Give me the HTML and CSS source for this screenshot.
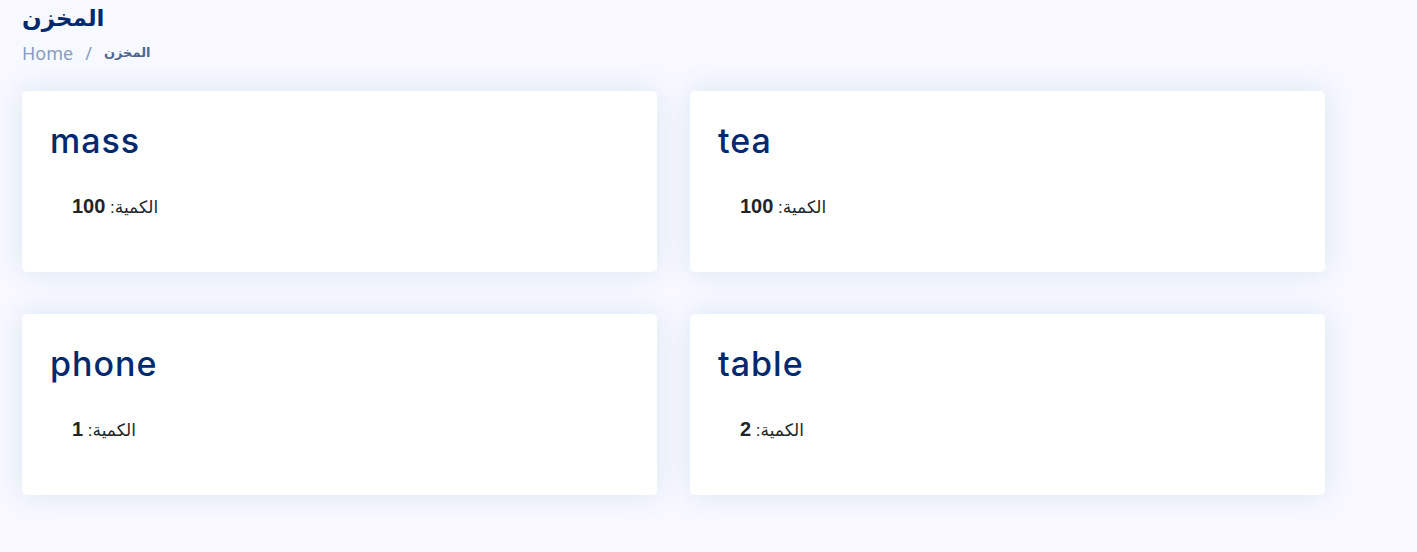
FILE: index.html
```html
<!DOCTYPE html>
<html lang="ar">
<head>
<meta charset="utf-8">
<title>المخزن</title>
<link rel="stylesheet" href="styles.css">
</head>
<body>
<main class="main">
  <div class="pagetitle">
    <h1 class="page-h">المخزن</h1>
    <nav class="breadcrumb">
      <span class="crumb-link">Home</span>
      <span class="crumb-sep">/</span>
      <span class="crumb-active">المخزن</span>
    </nav>
  </div>
  <section class="grid">
    <div class="card">
      <h2 class="card-title">mass</h2>
      <div class="qty"><span dir="rtl" class="qty-in">الكمية: <b>100</b></span></div>
    </div>
    <div class="card">
      <h2 class="card-title">tea</h2>
      <div class="qty"><span dir="rtl" class="qty-in">الكمية: <b>100</b></span></div>
    </div>
    <div class="card">
      <h2 class="card-title">phone</h2>
      <div class="qty"><span dir="rtl" class="qty-in">الكمية: <b>1</b></span></div>
    </div>
    <div class="card">
      <h2 class="card-title">table</h2>
      <div class="qty"><span dir="rtl" class="qty-in">الكمية: <b>2</b></span></div>
    </div>
  </section>
</main>
</body>
</html>
```
FILE: styles.css
```css
* { box-sizing: border-box; }
html, body { margin: 0; padding: 0; }
body {
  background: #f6f9ff;
  font-family: "Open Sans", "DejaVu Sans", sans-serif;
  color: #444444;
  width: 1417px;
  height: 552px;
  overflow: hidden;
}
.main { padding: 3px 0 0 22px; }
.pagetitle { margin-bottom: 27px; }
.page-h {
  margin: 0;
  font-family: "DejaVu Sans", sans-serif;
  font-size: 23px;
  font-weight: 700;
  color: #012970;
  line-height: 30px;
}
.breadcrumb {
  display: flex;
  align-items: center;
  gap: 10px;
  margin-top: 9px;
  font-family: "Noto Sans", "DejaVu Sans", sans-serif;
  font-size: 18px;
  line-height: 22px;
  color: #899bbd;
}
.crumb-sep { color: #899bbd; padding: 0 2px; }
.crumb-active {
  font-family: "DejaVu Sans", sans-serif;
  font-size: 13px;
  font-weight: 700;
  color: #51678f;
}
.grid {
  display: grid;
  grid-template-columns: 635px 635px;
  column-gap: 33px;
  row-gap: 42px;
}
.card {
  background: #ffffff;
  border-radius: 5px;
  box-shadow: 0 0 30px rgba(1, 41, 112, 0.1);
  height: 181px;
  padding: 28px 28px 0 28px;
}
.card-title {
  margin: 0;
  font-family: "Inter", "Open Sans", sans-serif;
  font-weight: 500;
  font-size: 34px;
  letter-spacing: 1px;
  line-height: 44px;
  color: #012970;
}
.qty {
  margin-top: 31px;
  padding-left: 22px;
  font-family: "Liberation Sans", "DejaVu Sans", sans-serif;
  font-size: 17px;
  color: #212529;
  line-height: 24px;
}
.qty-in { display: inline-block; }
.qty b { font-size: 20px; font-weight: 700; }
```
